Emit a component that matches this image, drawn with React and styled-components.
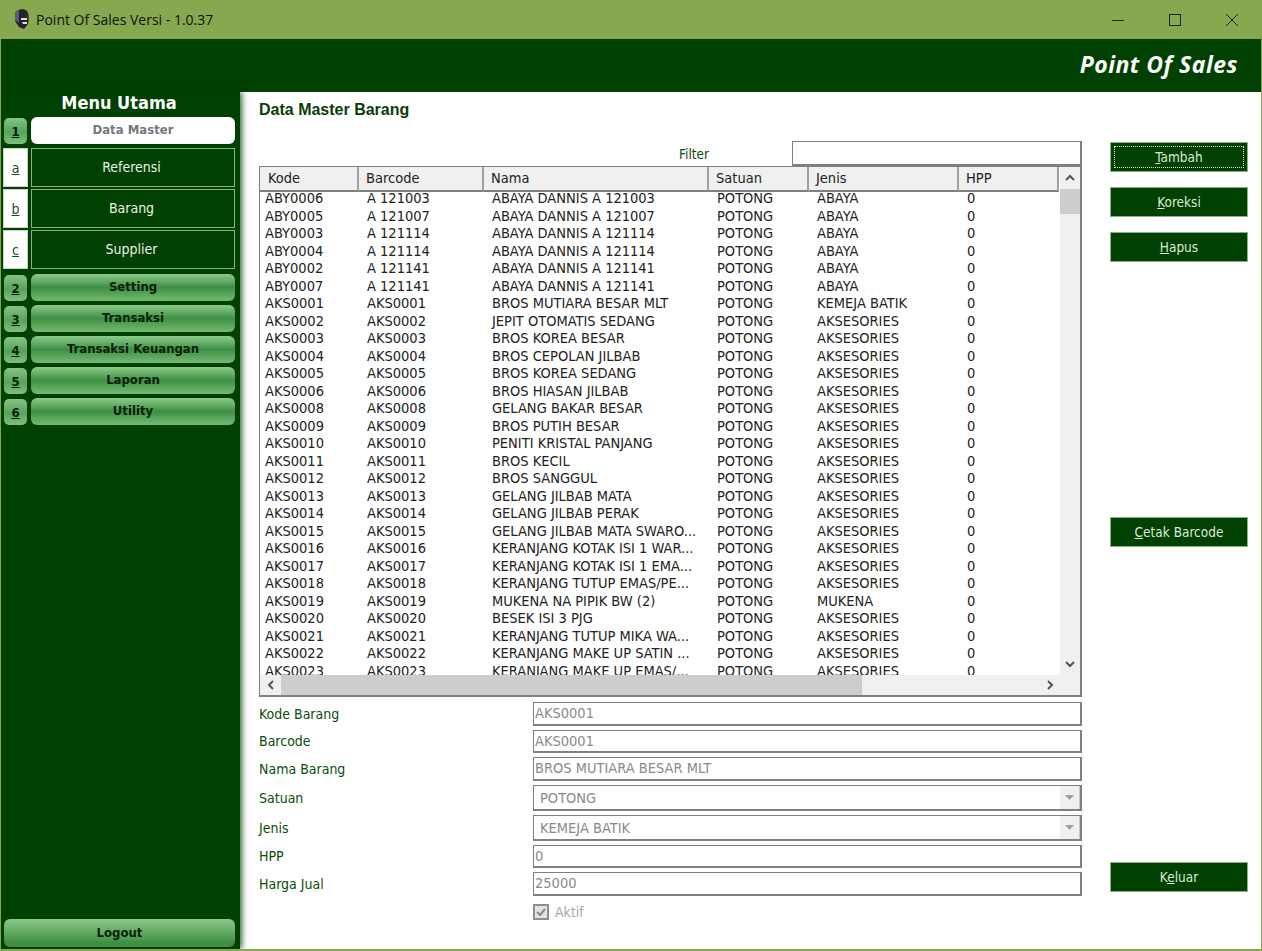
import React from 'react';
import styled, {createGlobalStyle} from 'styled-components';

const columns = [
  {label: 'Kode', width: 99},
  {label: 'Barcode', width: 125},
  {label: 'Nama', width: 225},
  {label: 'Satuan', width: 100},
  {label: 'Jenis', width: 150},
  {label: 'HPP', width: 100},
];

const gridColumns = columns.map((col) => `${col.width}px`).join(' ');

const rows = [
  ['ABY0006', 'A 121003', 'ABAYA DANNIS A 121003', 'ABAYA'],
  ['ABY0005', 'A 121007', 'ABAYA DANNIS A 121007', 'ABAYA'],
  ['ABY0003', 'A 121114', 'ABAYA DANNIS A 121114', 'ABAYA'],
  ['ABY0004', 'A 121114', 'ABAYA DANNIS A 121114', 'ABAYA'],
  ['ABY0002', 'A 121141', 'ABAYA DANNIS A 121141', 'ABAYA'],
  ['ABY0007', 'A 121141', 'ABAYA DANNIS A 121141', 'ABAYA'],
  ['AKS0001', 'AKS0001', 'BROS MUTIARA BESAR MLT', 'KEMEJA BATIK'],
  ['AKS0002', 'AKS0002', 'JEPIT OTOMATIS SEDANG', 'AKSESORIES'],
  ['AKS0003', 'AKS0003', 'BROS KOREA BESAR', 'AKSESORIES'],
  ['AKS0004', 'AKS0004', 'BROS CEPOLAN JILBAB', 'AKSESORIES'],
  ['AKS0005', 'AKS0005', 'BROS KOREA SEDANG', 'AKSESORIES'],
  ['AKS0006', 'AKS0006', 'BROS HIASAN JILBAB', 'AKSESORIES'],
  ['AKS0008', 'AKS0008', 'GELANG BAKAR BESAR', 'AKSESORIES'],
  ['AKS0009', 'AKS0009', 'BROS PUTIH BESAR', 'AKSESORIES'],
  ['AKS0010', 'AKS0010', 'PENITI KRISTAL PANJANG', 'AKSESORIES'],
  ['AKS0011', 'AKS0011', 'BROS KECIL', 'AKSESORIES'],
  ['AKS0012', 'AKS0012', 'BROS SANGGUL', 'AKSESORIES'],
  ['AKS0013', 'AKS0013', 'GELANG JILBAB MATA', 'AKSESORIES'],
  ['AKS0014', 'AKS0014', 'GELANG JILBAB PERAK', 'AKSESORIES'],
  ['AKS0015', 'AKS0015', 'GELANG JILBAB MATA SWARO...', 'AKSESORIES'],
  ['AKS0016', 'AKS0016', 'KERANJANG KOTAK ISI 1 WAR...', 'AKSESORIES'],
  ['AKS0017', 'AKS0017', 'KERANJANG KOTAK ISI 1 EMA...', 'AKSESORIES'],
  ['AKS0018', 'AKS0018', 'KERANJANG TUTUP EMAS/PE...', 'AKSESORIES'],
  ['AKS0019', 'AKS0019', 'MUKENA NA PIPIK BW (2)', 'MUKENA'],
  ['AKS0020', 'AKS0020', 'BESEK ISI 3 PJG', 'AKSESORIES'],
  ['AKS0021', 'AKS0021', 'KERANJANG TUTUP MIKA WA...', 'AKSESORIES'],
  ['AKS0022', 'AKS0022', 'KERANJANG MAKE UP SATIN ...', 'AKSESORIES'],
  ['AKS0023', 'AKS0023', 'KERANJANG MAKE UP EMAS/...', 'AKSESORIES'],
];

const fields = [
  {label: 'Kode Barang', value: 'AKS0001'},
  {label: 'Barcode', value: 'AKS0001'},
  {label: 'Nama Barang', value: 'BROS MUTIARA BESAR MLT'},
  {label: 'Satuan', value: 'POTONG', select: true},
  {label: 'Jenis', value: 'KEMEJA BATIK', select: true},
  {label: 'HPP', value: '0'},
  {label: 'Harga Jual', value: '25000'},
];

const subMenu = [
  {key: 'a', label: 'Referensi'},
  {key: 'b', label: 'Barang'},
  {key: 'c', label: 'Supplier'},
];

const mainMenu = [
  {key: '2', label: 'Setting'},
  {key: '3', label: 'Transaksi'},
  {key: '4', label: 'Transaksi Keuangan'},
  {key: '5', label: 'Laporan'},
  {key: '6', label: 'Utility'},
];

const Chevron = ({points}) => (
  <svg width="10" height="10" viewBox="0 0 10 10">
    <polyline points={points} fill="none" stroke="#555" strokeWidth="2" />
  </svg>
);

const App = () => {
  return (
    <Win>
      <GlobalStyle />
      <TitleBar>
        <AppIcon width="18" height="21" viewBox="0 0 18 21">
          <path d="M3 4 C5 0 12 -1 15 2 C17 5 17 11 16 15 L12 20 L7 18 L3 12 Z" fill="#24242e" />
          <path d="M3 4 C4 2 6 1 7 1 L7 14 L3 11 Z" fill="#5a5a70" />
          <path d="M9 9 H15 V11 H9 Z M10 13 H15 V15 H11 Z" fill="#e0e0e0" />
        </AppIcon>
        <TitleText>Point Of Sales Versi - 1.0.37</TitleText>
        <WinButtons>
          <WinButton>
            <svg width="12" height="12" viewBox="0 0 12 12"><path d="M0 6.5H12" stroke="#222" /></svg>
          </WinButton>
          <WinButton>
            <svg width="12" height="12" viewBox="0 0 12 12"><rect x="0.5" y="0.5" width="11" height="11" fill="none" stroke="#222" /></svg>
          </WinButton>
          <WinButton>
            <svg width="12" height="12" viewBox="0 0 12 12"><path d="M0 0L12 12M12 0L0 12" stroke="#222" /></svg>
          </WinButton>
        </WinButtons>
      </TitleBar>

      <Banner>Point Of Sales</Banner>

      <Body>
        <Sidebar>
          <MenuTitle>Menu Utama</MenuTitle>
          <MenuRow>
            <KeyButton><u>1</u></KeyButton>
            <ActiveItem>Data Master</ActiveItem>
          </MenuRow>
          <SubList>
            {subMenu.map((item) => (
              <SubRow key={item.key}>
                <SubKey><u>{item.key}</u></SubKey>
                <SubItem>{item.label}</SubItem>
              </SubRow>
            ))}
          </SubList>
          <MainList>
            {mainMenu.map((item) => (
              <MenuRow key={item.key}>
                <KeyButton><u>{item.key}</u></KeyButton>
                <GreenItem>{item.label}</GreenItem>
              </MenuRow>
            ))}
          </MainList>
          <LogoutButton>Logout</LogoutButton>
        </Sidebar>

        <Content>
          <Main>
            <PageTitle>Data Master Barang</PageTitle>
            <FilterRow>
              <FilterLabel>Filter</FilterLabel>
              <FilterInput />
            </FilterRow>
            <GridFrame>
              <ListArea>
                <HeaderRow>
                  {columns.map((col) => (
                    <HeaderCell key={col.label}>{col.label}</HeaderCell>
                  ))}
                </HeaderRow>
                <RowList>
                  {rows.map((row) => (
                    <DataRow key={row[0]}>
                      <Cell>{row[0]}</Cell>
                      <Cell>{row[1]}</Cell>
                      <Cell>{row[2]}</Cell>
                      <Cell>POTONG</Cell>
                      <Cell>{row[3]}</Cell>
                      <Cell>0</Cell>
                    </DataRow>
                  ))}
                </RowList>
              </ListArea>
              <VScroll>
                <ArrowV><Chevron points="1,7 5,3 9,7" /></ArrowV>
                <ThumbV />
                <ArrowV $end><Chevron points="1,3 5,7 9,3" /></ArrowV>
              </VScroll>
              <HScroll>
                <ArrowH><Chevron points="7,1 3,5 7,9" /></ArrowH>
                <ThumbH />
                <ArrowH $end><Chevron points="3,1 7,5 3,9" /></ArrowH>
              </HScroll>
              <Corner />
            </GridFrame>
            <Form>
              {fields.map((field) => (
                <FormRow key={field.label} $select={field.select}>
                  <FieldLabel>{field.label}</FieldLabel>
                  {field.select ? (
                    <SelectBox>
                      <SelectValue>{field.value}</SelectValue>
                      <SelectArrow>
                        <svg width="9" height="5" viewBox="0 0 9 5"><path d="M0 0H9L4.5 5Z" fill="#a0a0a0" /></svg>
                      </SelectArrow>
                    </SelectBox>
                  ) : (
                    <TextBox>{field.value}</TextBox>
                  )}
                </FormRow>
              ))}
              <CheckRow>
                <CheckBox>
                  <svg width="12" height="12" viewBox="0 0 12 12">
                    <path d="M2 6L5 9L10 3" fill="none" stroke="#8a8a8a" strokeWidth="2" />
                  </svg>
                </CheckBox>
                <CheckLabel>Aktif</CheckLabel>
              </CheckRow>
            </Form>
          </Main>

          <Actions>
            <ActionButton $focused><u>T</u>ambah</ActionButton>
            <ActionButton><u>K</u>oreksi</ActionButton>
            <ActionButton><u>H</u>apus</ActionButton>
            <ActionButton $top={240}><u>C</u>etak Barcode</ActionButton>
            <ActionButton $top={300}>K<u>e</u>luar</ActionButton>
          </Actions>
        </Content>
      </Body>
    </Win>
  );
};

const GlobalStyle = createGlobalStyle`
  html, body {
    margin: 0;
    padding: 0;
    height: 100%;
    overflow: hidden;
  }
  #root {
    height: 100%;
  }
`;

const Win = styled.div`
  display: flex;
  flex-direction: column;
  box-sizing: border-box;
  width: 1262px;
  height: 951px;
  background: #fff;
  border: solid #86a84f;
  border-width: 0 1px 2px 1px;
  font-family: 'DejaVu Sans', sans-serif;
  font-stretch: condensed;
  overflow: hidden;
`;

const TitleBar = styled.div`
  display: flex;
  align-items: center;
  flex: none;
  height: 39px;
  margin: 0 -1px;
  padding-left: 12px;
  background: #86a84f;
  font-family: 'Open Sans', sans-serif;
  font-stretch: normal;
`;

const AppIcon = styled.svg`
  flex: none;
  margin-right: 6px;
`;

const TitleText = styled.div`
  flex: 1;
  color: #111;
  font-size: 14px;
`;

const WinButtons = styled.div`
  display: flex;
  padding-right: 2px;
`;

const WinButton = styled.div`
  display: flex;
  align-items: center;
  justify-content: center;
  width: 57px;
  height: 39px;
`;

const Banner = styled.div`
  flex: none;
  box-sizing: border-box;
  height: 53px;
  padding: 10px 23px 0 0;
  background: #004000;
  color: #fff;
  font-family: 'Open Sans', sans-serif;
  font-stretch: normal;
  font-size: 23px;
  font-weight: 700;
  font-style: italic;
  line-height: 30px;
  text-align: right;
  letter-spacing: 0.5px;
`;

const Body = styled.div`
  display: flex;
  flex: 1;
  min-height: 0;
`;

const Sidebar = styled.div`
  display: flex;
  flex-direction: column;
  flex: none;
  box-sizing: border-box;
  width: 239px;
  padding: 0 5px 2px 2px;
  background: #004000;
  box-shadow: 2px 0 6px rgba(0, 64, 0, 0.8);
  z-index: 1;
`;

const MenuTitle = styled.div`
  height: 25px;
  color: #fff;
  font-size: 18px;
  font-weight: 700;
  line-height: 21px;
  text-align: center;
`;

const MenuRow = styled.div`
  display: flex;
  align-items: center;
  gap: 4px;
  height: 27px;
  padding-left: 1px;
`;

const KeyButton = styled.div`
  flex: none;
  width: 23px;
  height: 26px;
  border-radius: 5px;
  background: linear-gradient(#84c482, #58a35b 55%, #7fc07d);
  color: #0a200a;
  font-size: 13px;
  font-weight: 700;
  line-height: 27px;
  text-align: center;
`;

const ActiveItem = styled.div`
  flex: 1;
  height: 27px;
  border-radius: 6px;
  background: #fff;
  color: #77777f;
  font-size: 13px;
  font-weight: 700;
  line-height: 26px;
  text-align: center;
`;

const SubList = styled.div`
  display: flex;
  flex-direction: column;
  gap: 2px;
  margin-top: 4px;
`;

const SubRow = styled.div`
  display: flex;
  gap: 3px;
  height: 39px;
`;

const SubKey = styled.div`
  flex: none;
  box-sizing: border-box;
  width: 25px;
  background: #fff;
  border: 1px solid #c9d8c0;
  color: #1c4a1c;
  font-size: 14px;
  line-height: 38px;
  text-align: center;
`;

const SubItem = styled.div`
  flex: 1;
  box-sizing: border-box;
  padding-right: 3px;
  background: #004000;
  border: 1px solid #8db08a;
  color: #e9f3e4;
  font-size: 14px;
  line-height: 37px;
  text-align: center;
`;

const MainList = styled.div`
  display: flex;
  flex-direction: column;
  gap: 4px;
  flex: 1;
  margin-top: 5px;
`;

const GreenItem = styled.div`
  flex: 1;
  height: 27px;
  border-radius: 6px;
  background: linear-gradient(#8ccb8a, #3f8f43 50%, #74bb72);
  color: #0a200a;
  font-size: 13px;
  font-weight: 700;
  line-height: 26px;
  text-align: center;
`;

const LogoutButton = styled(GreenItem)`
  flex: none;
  height: 28px;
  margin-left: 1px;
  line-height: 27px;
  background: linear-gradient(#8ccb8a, #3f8f43 85%);
`;

const Content = styled.div`
  display: flex;
  flex: 1;
  min-width: 0;
  padding-left: 19px;
`;

const Main = styled.div`
  display: flex;
  flex-direction: column;
  flex: none;
  width: 823px;
`;

const PageTitle = styled.div`
  height: 49px;
  padding-top: 7px;
  box-sizing: border-box;
  color: #0b3d0b;
  font-family: 'Liberation Sans', sans-serif;
  font-stretch: normal;
  font-size: 16px;
  font-weight: 700;
  line-height: 22px;
`;

const FilterRow = styled.div`
  display: flex;
  justify-content: flex-end;
  align-items: center;
  height: 25px;
`;

const FilterLabel = styled.div`
  margin-right: 83px;
  color: #0b4d0b;
  font-size: 13.5px;
  line-height: 22px;
`;

const FilterInput = styled.div`
  box-sizing: border-box;
  width: 290px;
  height: 25px;
  background: #fff;
  border: 1px solid #808080;
  border-width: 1px 2px 2px 1px;
`;

const GridFrame = styled.div`
  display: grid;
  grid-template-columns: 1fr 20px;
  grid-template-rows: 1fr 20px;
  box-sizing: border-box;
  height: 531px;
  border: 1px solid #808080;
  border-width: 1px 2px 2px 1px;
  background: #fff;
`;

const ListArea = styled.div`
  min-width: 0;
  min-height: 0;
  overflow: hidden;
`;

const HeaderRow = styled.div`
  display: grid;
  grid-template-columns: ${gridColumns};
  height: 22px;
`;

const HeaderCell = styled.div`
  box-sizing: border-box;
  padding-left: 7px;
  background: #f0f0f0;
  border-right: 2px solid #a0a0a0;
  border-bottom: 2px solid #7f7f7f;
  color: #222;
  font-size: 14.5px;
  line-height: 23px;
  &:first-child {
    padding-left: 8px;
  }
`;

const RowList = styled.div`
  padding-top: 1px;
`;

const DataRow = styled.div`
  display: grid;
  grid-template-columns: ${gridColumns};
  height: 17.5px;
`;

const Cell = styled.div`
  padding-left: 8px;
  color: #222;
  font-size: 14.5px;
  line-height: 17px;
  white-space: nowrap;
  overflow: hidden;
  &:first-child {
    padding-left: 5px;
  }
`;

const VScroll = styled.div`
  display: flex;
  flex-direction: column;
  background: #f0f0f0;
`;

const ArrowV = styled.div`
  display: flex;
  align-items: center;
  justify-content: center;
  flex: none;
  height: 22px;
  margin-top: ${(p) => (p.$end ? 'auto' : '0')};
`;

const ThumbV = styled.div`
  height: 25px;
  background: #cdcdcd;
`;

const HScroll = styled.div`
  display: flex;
  background: #f0f0f0;
`;

const ArrowH = styled.div`
  display: flex;
  align-items: center;
  justify-content: center;
  flex: none;
  width: 21px;
  margin-left: ${(p) => (p.$end ? 'auto' : '0')};
`;

const ThumbH = styled.div`
  width: 581px;
  background: #cdcdcd;
`;

const Corner = styled.div`
  background: #f0f0f0;
`;

const Form = styled.div`
  display: flex;
  flex-direction: column;
  gap: 4px;
  margin-top: 5px;
`;

const FormRow = styled.div`
  display: flex;
  align-items: center;
  height: ${(p) => (p.$select ? '26px' : '23.5px')};
`;

const FieldLabel = styled.div`
  flex: none;
  width: 274px;
  color: #0b4d0b;
  font-size: 14px;
`;

const TextBox = styled.div`
  flex: 1;
  box-sizing: border-box;
  height: 100%;
  padding-left: 1px;
  background: #fff;
  border: 1px solid #808080;
  border-width: 1px 2px 2px 1px;
  color: #8a8a8a;
  font-size: 14.5px;
  line-height: 20px;
`;

const SelectBox = styled(TextBox)`
  display: flex;
  justify-content: space-between;
  padding-left: 0;
`;

const SelectValue = styled.div`
  padding-left: 6px;
  line-height: 25px;
`;

const SelectArrow = styled.div`
  display: flex;
  align-items: center;
  justify-content: center;
  width: 19px;
  background: #f0f0f0;
  border-right: 1px solid #c8c8c8;
`;

const CheckRow = styled.div`
  display: flex;
  align-items: center;
  gap: 6px;
  margin: 4px 0 0 274px;
`;

const CheckBox = styled.div`
  display: flex;
  align-items: center;
  justify-content: center;
  box-sizing: border-box;
  width: 16px;
  height: 16px;
  background: #e4e4e4;
  border: 2px solid #8f8f8f;
`;

const CheckLabel = styled.div`
  color: #a8a8a8;
  font-size: 14px;
`;

const Actions = styled.div`
  display: flex;
  flex-direction: column;
  flex: none;
  width: 138px;
  margin-left: 28px;
  padding-top: 50px;
`;

const ActionButton = styled.div`
  box-sizing: border-box;
  flex: none;
  height: 30px;
  margin-top: ${(p) => (p.$top ? `${p.$top}px` : '0')};
  margin-bottom: 15px;
  background: #004000;
  border: 1px solid #8db08a;
  color: #dcebd6;
  font-size: 13.5px;
  line-height: 28px;
  text-align: center;
  outline: ${(p) => (p.$focused ? '1px dotted #dcebd6' : 'none')};
  outline-offset: -5px;
`;

export default App;
